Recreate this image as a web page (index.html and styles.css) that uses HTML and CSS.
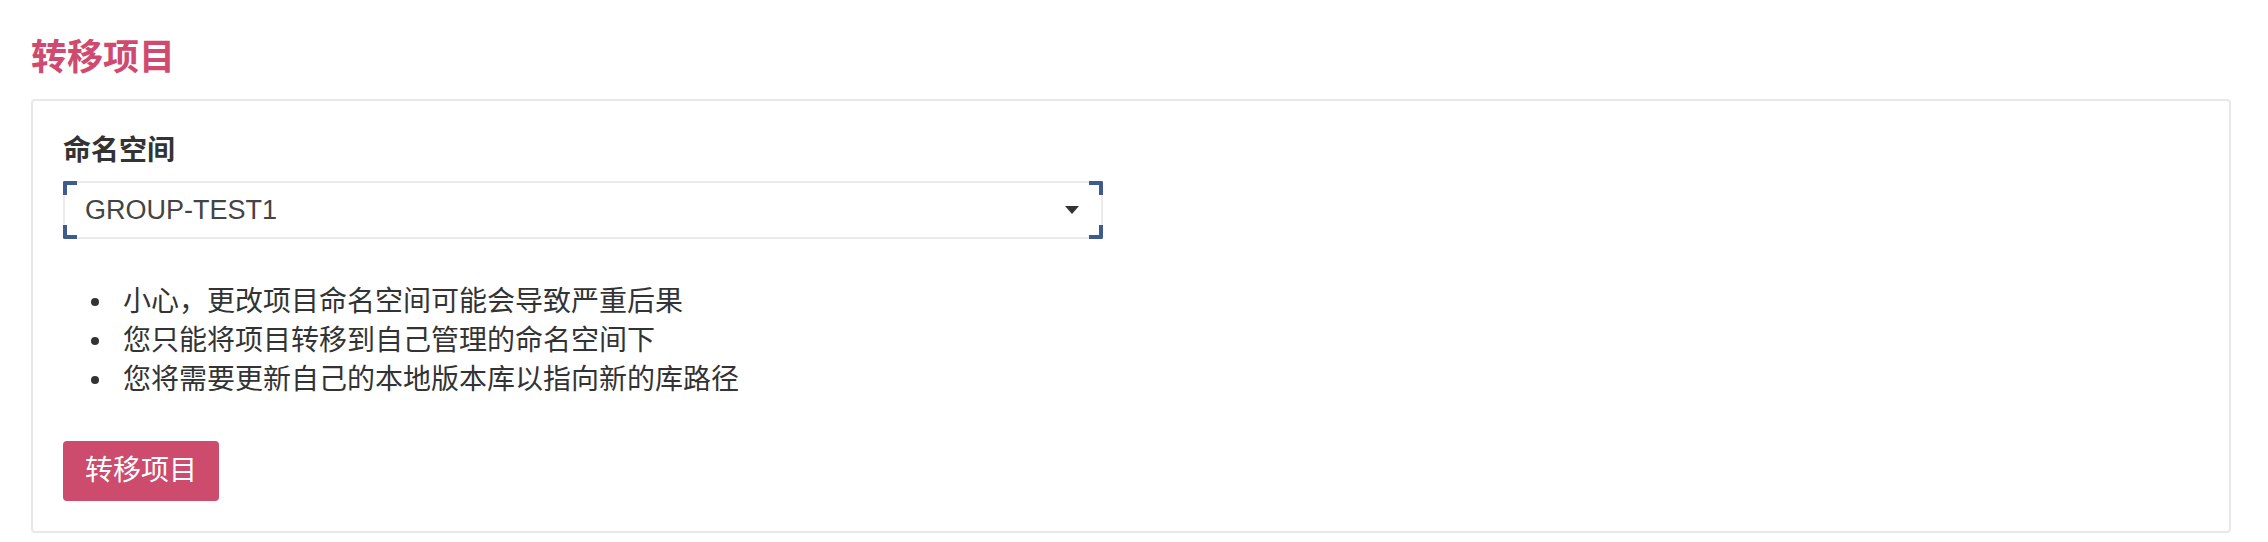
FILE: index.html
```html
<!DOCTYPE html>
<html lang="zh-CN">
<head>
<meta charset="utf-8">
<title>转移项目</title>
<link rel="stylesheet" href="styles.css">
</head>
<body>
<div class="page">
  <h3 class="title">转移项目</h3>
  <div class="panel">
    <div class="form-group">
      <label class="label">命名空间</label>
      <div class="select">
        <span class="select-value">GROUP-TEST1</span>
        <span class="caret"></span>
        <span class="corner tl"></span>
        <span class="corner tr"></span>
        <span class="corner bl"></span>
        <span class="corner br"></span>
      </div>
    </div>
    <ul class="notes">
      <li>小心，更改项目命名空间可能会导致严重后果</li>
      <li>您只能将项目转移到自己管理的命名空间下</li>
      <li>您将需要更新自己的本地版本库以指向新的库路径</li>
    </ul>
    <button class="btn" type="button">转移项目</button>
  </div>
</div>
</body>
</html>
```

FILE: styles.css
```css
* { box-sizing: border-box; }

body {
  margin: 0;
  background: #ffffff;
  font-family: "Liberation Sans", "Noto Sans CJK SC", sans-serif;
  font-size: 28px;
  color: #333333;
}

.page {
  padding: 0 37px 0 31px;
}

.title {
  margin: 38px 0 21px;
  font-size: 36px;
  line-height: 40px;
  font-weight: 700;
  color: #d04a70;
}

.panel {
  border: 2px solid #e8e8e8;
  border-radius: 4px;
  padding: 30px 30px 30px;
}

.label {
  display: block;
  font-weight: 700;
  line-height: 40px;
  margin-bottom: 10px;
  color: #333333;
}

.select {
  position: relative;
  width: 1040px;
  height: 58px;
  border: 2px solid #ebebeb;
  display: flex;
  align-items: center;
  justify-content: space-between;
  padding: 0 22px 0 20px;
}

.select-value {
  font-size: 27px;
  color: #444444;
}

.caret {
  width: 0;
  height: 0;
  border-left: 7.5px solid transparent;
  border-right: 7.5px solid transparent;
  border-top: 8px solid #333333;
}

.corner {
  position: absolute;
  width: 14px;
  height: 14px;
  border: 0 solid #3d5b8c;
}
.corner.tl { top: -2px; left: -2px; border-top-width: 4px; border-left-width: 4px; border-top-left-radius: 2px; }
.corner.tr { top: -2px; right: -2px; border-top-width: 4px; border-right-width: 4px; border-top-right-radius: 2px; }
.corner.bl { bottom: -2px; left: -2px; border-bottom-width: 4px; border-left-width: 4px; border-bottom-left-radius: 2px; }
.corner.br { bottom: -2px; right: -2px; border-bottom-width: 4px; border-right-width: 4px; border-bottom-right-radius: 2px; }

.notes {
  margin: 43px 0 42px;
  padding-left: 60px;
  line-height: 39px;
  color: #333333;
  list-style: none;
}

.notes li {
  position: relative;
}

.notes li::before {
  content: "";
  position: absolute;
  left: -32px;
  top: 16px;
  width: 8px;
  height: 8px;
  border-radius: 50%;
  background: #333333;
}

.btn {
  display: block;
  border: none;
  border-radius: 4px;
  background: #cd4b6d;
  color: #ffffff;
  font-family: "Liberation Sans", "Noto Sans CJK SC", sans-serif;
  font-size: 28px;
  line-height: 40px;
  padding: 10px 22px;
  cursor: pointer;
}
```
